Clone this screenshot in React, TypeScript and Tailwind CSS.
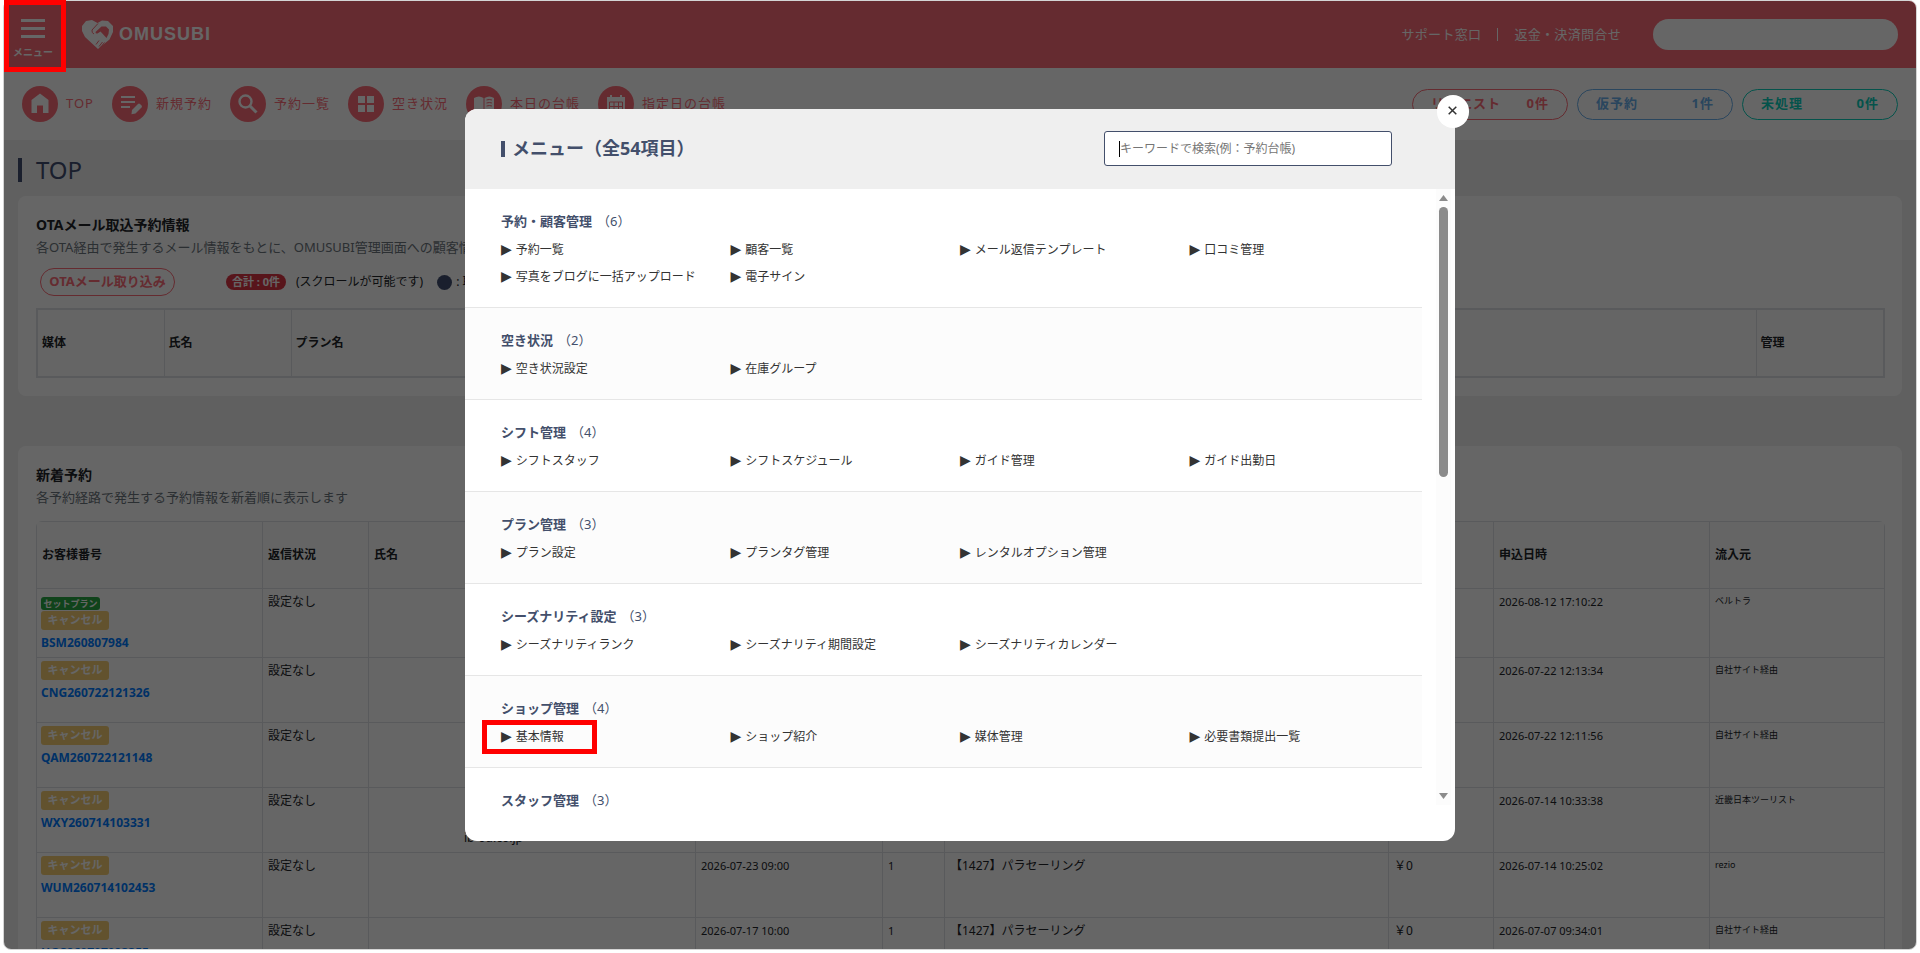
import React from 'react';

interface NavEntry {
    label: string;
    icon: React.ReactNode;
}

interface Booking {
    id: string;
    set?: boolean;
    name?: string;
    date?: string;
    count?: string;
    plan?: string;
    price?: string;
    applied: string;
    source: string;
    height: string;
}

const NAV: NavEntry[] = [
    {
        label: 'TOP',
        icon: <path d="M18 7.5 9.500 14v13H15v-7.500h6V27h5.500V14z" />,
    },
    {
        label: '新規予約',
        icon: (
            <>
                <path d="M9 10h14v2H9zM9 15h14v2H9zM9 20h9v2H9z" />
                <path d="m20 24 6-6q1-1 2 0l1.500 1.500q1 1 0 2l-6 6-4 .8z" />
            </>
        ),
    },
    {
        label: '予約一覧',
        icon: (
            <>
                <circle cx="15.500" cy="15.500" r="6" fill="none" stroke="currentColor" strokeWidth="2.400" />
                <path d="m20 20 6.500 6.500" fill="none" stroke="currentColor" strokeWidth="3" />
            </>
        ),
    },
    {
        label: '空き状況',
        icon: <path d="M10 10h7v7h-7zM19 10h7v7h-7zM10 19h7v7h-7zM19 19h7v7h-7z" />,
    },
    {
        label: '本日の台帳',
        icon: (
            <>
                <path d="M8 12q5-3 9.500 0v14q-4.500-2-9.500 0zM18.500 12q5-3 9.500 0v14q-4.500-2-9.500 0z" />
                <path d="M20.500 14q3-1 5.500 0M20.500 17q3-1 5.500 0M20.500 20q3-1 5.500 0" fill="none" stroke="#fc6c78" />
            </>
        ),
    },
    {
        label: '指定日の台帳',
        icon: (
            <>
                <path d="M12 9h2v2h8V9h2v2h3v16H9V11h3z" />
                <path d="M11.500 16h13v9h-13zM16 16v9M20.500 16v9M11.500 20.500h13" fill="none" stroke="#fc6c78" />
            </>
        ),
    },
];

const MENU: { title: string; items: string[]; count: number }[] = [
    {
        title: '予約・顧客管理',
        count: 6,
        items: ['予約一覧', '顧客一覧', 'メール返信テンプレート', '口コミ管理', '写真をブログに一括アップロード', '電子サイン'],
    },
    { title: '空き状況', count: 2, items: ['空き状況設定', '在庫グループ'] },
    { title: 'シフト管理', count: 4, items: ['シフトスタッフ', 'シフトスケジュール', 'ガイド管理', 'ガイド出勤日'] },
    { title: 'プラン管理', count: 3, items: ['プラン設定', 'プランタグ管理', 'レンタルオプション管理'] },
    {
        title: 'シーズナリティ設定',
        count: 3,
        items: ['シーズナリティランク', 'シーズナリティ期間設定', 'シーズナリティカレンダー'],
    },
    { title: 'ショップ管理', count: 4, items: ['基本情報', 'ショップ紹介', '媒体管理', '必要書類提出一覧'] },
    { title: 'スタッフ管理', count: 3, items: [] },
];

const BOOKINGS: Booking[] = [
    { id: 'BSM260807984', set: true, applied: '2026-08-12 17:10:22', source: 'ベルトラ', height: 'h-[69px]' },
    { id: 'CNG260722121326', applied: '2026-07-22 12:13:34', source: '自社サイト経由', height: 'h-[65px]' },
    { id: 'QAM260722121148', applied: '2026-07-22 12:11:56', source: '自社サイト経由', height: 'h-[65px]' },
    { id: 'WXY260714103331', name: 'ib-ou.co.jp', applied: '2026-07-14 10:33:38', source: '近畿日本ツーリスト', height: 'h-[65px]' },
    {
        id: 'WUM260714102453', date: '2026-07-23 09:00', count: '1', plan: '【1427】パラセーリング',
        price: '￥0', applied: '2026-07-14 10:25:02', source: 'rezio', height: 'h-[65px]',
    },
    {
        id: 'HGC260707093355', date: '2026-07-17 10:00', count: '1', plan: '【1427】パラセーリング',
        price: '￥0', applied: '2026-07-07 09:34:01', source: '自社サイト経由', height: 'h-[65px]',
    },
];

const Logo = () => (
    <a href="#top" className="flex items-center gap-[5px] text-white">
        <svg width="32" height="30" viewBox="0 0 32 30" aria-hidden="true">
            <path
                fill="currentColor"
                d="M0 6 4 1l6-1 5.500 3L20 .5l6 .5 5 5v6l-3.500 7.500L22 24l-3 2-3 3L3 17 0 11z"
            />
            <path fill="#fc6c78" d="m13.500 12 6-5.500h4.500l3 3-.5 4.500-2 4-6-6.500-3 2q-2 .5-2-1.500z" />
            <path
                d="M16 3.500 10 10q-.5 3 2 4M14 24.500l3-4M17 26.500l3.500-4.500M20 25.500l2.500-3"
                fill="none"
                stroke="#fc6c78"
                strokeWidth="1"
            />
        </svg>
        <span className="font-['Liberation_Sans'] text-[18px] font-bold tracking-[1px]">OMUSUBI</span>
    </a>
);

const Header = () => (
    <header className="flex h-[67px] items-center justify-between bg-[#fc6c78] pr-[18px] text-white">
        <div className="flex items-center">
            <button type="button" className="flex w-[58px] flex-col items-center pt-2">
                <span className="flex flex-col gap-[5px]">
                    <span className="h-[3px] w-6 bg-white" />
                    <span className="h-[3px] w-6 bg-white" />
                    <span className="h-[3px] w-6 bg-white" />
                </span>
                <span className="mt-2 pr-1 pl-1 text-[10px] leading-3 font-bold whitespace-nowrap">メニュー</span>
            </button>
            <div className="ml-5">
                <Logo />
            </div>
        </div>
        <div className="flex items-center text-[13px] tracking-wide">
            <a href="#support">サポート窓口</a>
            <span className="mx-4 h-[13px] w-px bg-white" />
            <a href="#refund">返金・決済問合せ</a>
            <input type="text" aria-label="検索" className="ml-8 h-[31px] w-[245px] rounded-full bg-white px-4" />
        </div>
    </header>
);

const StatusPill = ({ label, count, tone }: { label: string; count: string; tone: string }) => (
    <a
        href="#status"
        className={`flex h-[31px] w-[156px] items-center justify-between rounded-full border px-[18px] text-[13px] font-bold tracking-[1px] ${tone}`}
    >
        <span>{label}</span>
        <span>{count}</span>
    </a>
);

const NavBar = () => (
    <nav className="flex h-[72px] items-center justify-between bg-white pr-[18px] pl-[18px]">
        <ul className="flex items-center gap-[18px]">
            {NAV.map(item => (
                <li key={item.label}>
                    <a href="#nav" className="flex items-center gap-2 text-[#fc6c78]">
                        <span className="flex size-9 rounded-full bg-[#fc6c78] text-white">
                            <svg width="36" height="36" viewBox="0 0 36 36" fill="currentColor" aria-hidden="true">
                                {item.icon}
                            </svg>
                        </span>
                        <span className="text-[13px] tracking-[1px] whitespace-nowrap">{item.label}</span>
                    </a>
                </li>
            ))}
        </ul>
        <div className="flex gap-[9px]">
            <StatusPill label="リクエスト" count="0件" tone="border-[#fc6c78] text-[#fc6c78]" />
            <StatusPill label="仮予約" count="1件" tone="border-[#6aaeea] text-[#6aaeea]" />
            <StatusPill label="未処理" count="0件" tone="border-[#0cd0bc] text-[#0cd0bc]" />
        </div>
    </nav>
);

const OtaCard = () => (
    <section className="rounded-lg bg-white py-[18px] pr-[17px] pl-[18px]">
        <h2 className="text-[14px] leading-[22px] font-bold">OTAメール取込予約情報</h2>
        <p className="text-[13px] leading-[22px] text-[#6c757d]">
            各OTA経由で発生するメール情報をもとに、OMUSUBI管理画面への顧客情報
        </p>
        <div className="mt-[10px] flex h-7 items-center pl-1 text-[12px]">
            <button
                type="button"
                className="h-7 w-[135px] rounded-full border border-[#fc6c78] text-[13px] font-bold text-[#fc6c78]"
            >
                OTAメール取り込み
            </button>
            <span className="ml-[51px] flex h-4 w-[60px] items-center justify-center rounded-full bg-[#dc3545] text-[11px] font-bold text-white">
                合計 : 0件
            </span>
            <span className="ml-[10px]">(スクロールが可能です)</span>
            <span className="mr-1 ml-[14px] size-[15px] rounded-full bg-[#424f70]" />
            <span>: 取</span>
        </div>
        <table className="mt-3 h-[70px] w-full table-fixed border-collapse border-2 border-[#dee2e6] text-[12px]">
            <colgroup>
                <col className="w-[127px]" />
                <col className="w-[127px]" />
                <col />
                <col className="w-[128px]" />
            </colgroup>
            <thead>
                <tr className="bg-[#fdfdfd] text-left">
                    {['媒体', '氏名', 'プラン名', '管理'].map(h => (
                        <th key={h} className="border border-[#dee2e6] px-1 font-bold">{h}</th>
                    ))}
                </tr>
            </thead>
        </table>
    </section>
);

const CELL = 'border border-[#dee2e6] px-[5px] pt-[3px] align-top';

const BookingRow = ({ row }: { row: Booking }) => (
    <tr className={row.height}>
        <td className="border border-[#dee2e6] px-1 pt-[3px] align-top">
            {row.set && (
                <span className="mt-[5px] mb-px flex h-[13px] w-[59px] items-center justify-center rounded-[3px] bg-[#28a745] text-[9px] font-bold text-white">
                    セットプラン
                </span>
            )}
            <span className="flex h-[19px] w-[68px] items-center justify-center rounded-[3px] bg-[#f5cd73] text-[11px] font-bold text-white">
                キャンセル
            </span>
            <a href="#booking" className="mt-1 block text-[12px] leading-[18px] font-bold text-[#007bff]">{row.id}</a>
        </td>
        <td className={CELL}><span className="leading-[19px]">設定なし</span></td>
        <td className={CELL}>{row.name && <div className="pt-[39px] pl-[90px] leading-4">{row.name}</div>}</td>
        <td className={`${CELL} text-[11px] leading-[19px]`}>{row.date}</td>
        <td className={`${CELL} text-[11px] leading-[19px]`}>{row.count}</td>
        <td className={`${CELL} leading-[19px]`}>{row.plan}</td>
        <td className={`${CELL} leading-[19px]`}>{row.price}</td>
        <td className={`${CELL} text-[11px] leading-[19px]`}>{row.applied}</td>
        <td className={`${CELL} text-[9px] leading-[17px]`}>{row.source}</td>
    </tr>
);

const BookingCard = () => (
    <section className="mt-[50px] rounded-lg bg-white py-[18px] pr-[17px] pl-[18px]">
        <h2 className="text-[14px] leading-[22px] font-bold">新着予約</h2>
        <p className="text-[13px] leading-[22px] text-[#6c757d]">各予約経路で発生する予約情報を新着順に表示します</p>
        <div className="mt-[13px] overflow-hidden rounded-md">
            <table className="w-full table-fixed border-collapse text-[12px]">
                <colgroup>
                    <col className="w-[226px]" />
                    <col className="w-[106px]" />
                    <col className="w-[327px]" />
                    <col className="w-[187px]" />
                    <col className="w-[62px]" />
                    <col />
                    <col className="w-[105px]" />
                    <col className="w-[216px]" />
                    <col className="w-[175px]" />
                </colgroup>
                <thead>
                    <tr className="h-[67px] bg-[#fdfdfd] text-left">
                        {['お客様番号', '返信状況', '氏名', '', '', '', '', '申込日時', '流入元'].map((h, i) => (
                            <th key={i} className="border border-[#dee2e6] px-[5px] font-bold">{h}</th>
                        ))}
                    </tr>
                </thead>
                <tbody>
                    {BOOKINGS.map(row => (
                        <BookingRow key={row.id} row={row} />
                    ))}
                </tbody>
            </table>
        </div>
    </section>
);

const Scrollbar = () => (
    <div className="mr-1 mb-9 flex w-[15px] flex-col items-center justify-between bg-[#fcfcfc] py-[6px]" aria-hidden="true">
        <div>
            <svg width="9" height="6" viewBox="0 0 9 6"><path d="M4.500 0 9 6H0z" fill="#8b8b8b" /></svg>
            <div className="mt-[6px] h-[270px] w-[9px] rounded-full bg-[#8b8b8b]" />
        </div>
        <svg width="9" height="6" viewBox="0 0 9 6"><path d="M4.500 6 9 0H0z" fill="#8b8b8b" /></svg>
    </div>
);

const MenuModal = () => (
    <div
        role="dialog"
        aria-label="メニュー"
        className="relative flex h-[732px] w-[990px] max-w-full flex-col rounded-xl bg-white"
    >
        <button
            type="button"
            aria-label="閉じる"
            className="absolute -top-[14px] -right-[14px] flex h-[33px] w-8 items-center justify-center rounded-full bg-white pr-px pb-[2px] text-[#333]"
        >
            <svg width="9" height="9" viewBox="0 0 9 9" aria-hidden="true">
                <path d="m.7.7 7.600 7.600M8.300.7.7 8.300" stroke="currentColor" strokeWidth="1.500" />
            </svg>
        </button>
        <div className="flex h-20 shrink-0 items-center justify-between rounded-t-xl bg-[#efefef] pr-[63px] pb-px pl-9">
            <h2 className="flex items-center gap-[7px] text-[18px] font-bold text-[#434f6b]">
                <span className="h-4 w-1 bg-[#434f6b]" />
                メニュー（全54項目）
            </h2>
            <div className="relative">
                <input
                    type="text"
                    aria-label="キーワードで検索"
                    placeholder="キーワードで検索(例：予約台帳)"
                    className="block h-[35px] w-[288px] rounded-[3px] border border-[#434f6b] bg-white px-[15px] text-[12px] placeholder:text-[#757575]"
                />
                <span className="absolute top-[10px] left-[15px] h-4 w-px bg-black" />
            </div>
        </div>
        <div className="flex min-h-0 flex-1">
            <div className="flex-1 overflow-hidden">
                {MENU.map(section => (
                    <section
                        key={section.title}
                        className="border-b border-[#e6e6e6] pt-[22px] pr-[3px] pb-[17px] pl-9 last:border-b-0 even:bg-[#fcfcfc]"
                    >
                        <h3 className="mb-[5px] text-[13px] leading-5 font-bold text-[#434f6b]">
                            {section.title}
                            <span className="ml-[5px] font-normal">（{section.count}）</span>
                        </h3>
                        <ul className="grid grid-cols-4 text-[12px] leading-[27px] text-[#333]">
                            {section.items.map(item => (
                                <li key={item} className="relative">
                                    <a href="#menu" className="flex items-center gap-1 whitespace-nowrap">
                                        <span className="font-['DejaVu_Sans'] text-[14px]">▶</span>
                                        {item}
                                    </a>
                                    {item === '基本情報' && (
                                        <span className="absolute -top-[3px] -left-[19px] h-[34px] w-[115px] border-5 border-[#f00]" />
                                    )}
                                </li>
                            ))}
                        </ul>
                    </section>
                ))}
            </div>
            <div className="w-[14px]" />
            <Scrollbar />
        </div>
    </div>
);

const App: React.FC = () => {
    return (
        <div className="relative h-screen bg-white px-[3px] pb-[3px] font-['Noto_Sans','Noto_Sans_CJK_JP',sans-serif] text-[#212529]">
            <div className="relative h-full overflow-hidden rounded-lg border border-[#d4d4d4] bg-[#f0f0f0]">
                <Header />
                <NavBar />
                <main className="px-[14px] pt-[18px]">
                    <h1 className="mb-[14px] flex items-center gap-[14px] text-[24px] leading-6 text-[#424f70]">
                        <span className="h-6 w-1 bg-[#424f70]" />
                        TOP
                    </h1>
                    <OtaCard />
                    <BookingCard />
                </main>

                {/* Backdrop and menu */}
                <div className="absolute inset-0 flex items-center justify-center bg-black/60">
                    <MenuModal />
                </div>
            </div>

            {/* Highlight on the menu button */}
            <div className="absolute top-0 left-1 h-[72px] w-[62px] border-5 border-[#f00]" />
        </div>
    );
};

export default App;
